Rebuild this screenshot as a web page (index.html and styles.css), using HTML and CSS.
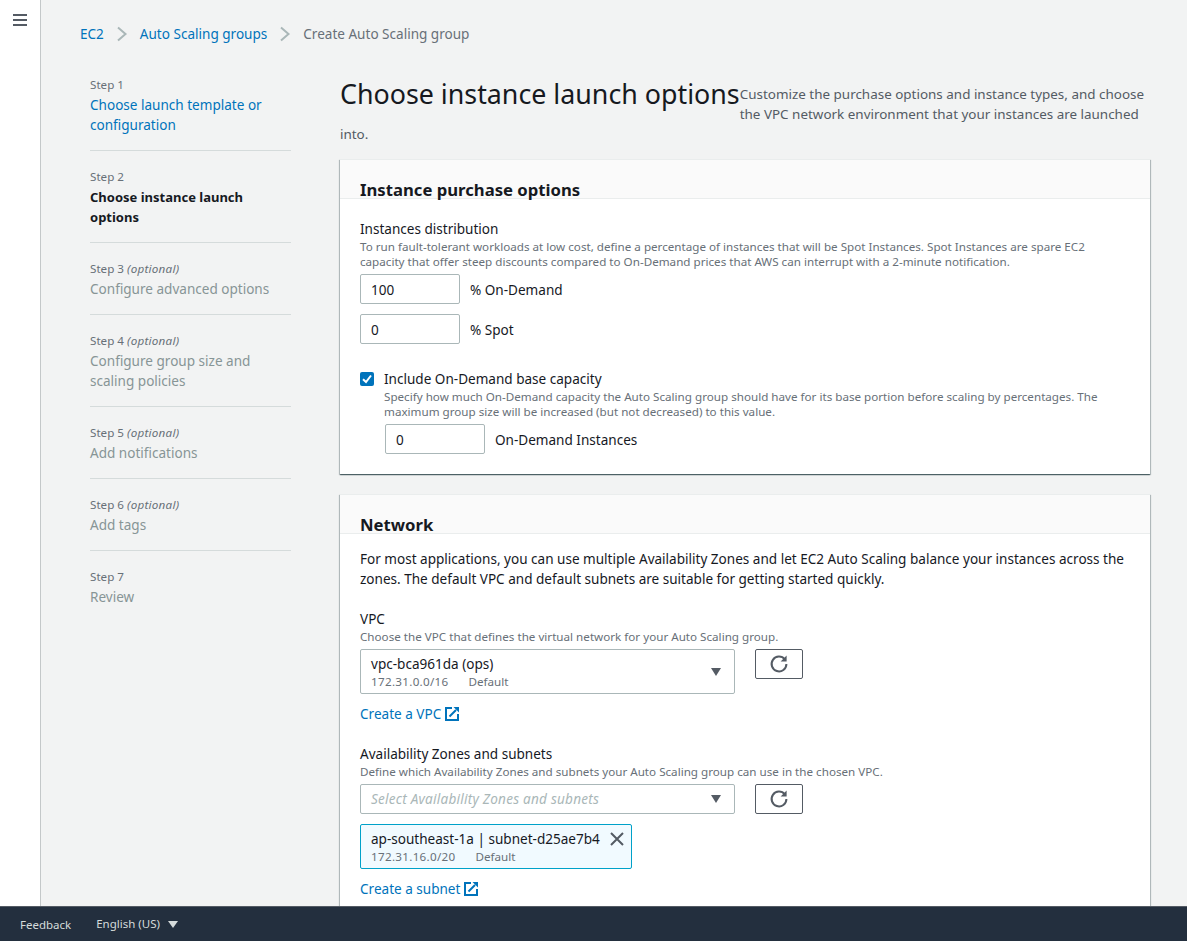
FILE: index.html
```html
<!DOCTYPE html>
<html lang="en">
<head>
    <meta charset="UTF-8">
    <meta name="viewport" content="width=device-width, initial-scale=1.0">
    <title>Create Auto Scaling group</title>
    <link rel="stylesheet" href="styles.css">
</head>
<body>

<div id="app">
    <div class="app-body">
        <nav class="side-rail">
            <button class="menu-btn" aria-label="Open navigation">
                <svg width="16" height="14" viewBox="0 0 16 14"><path d="M1 2h14M1 7h14M1 12h14" fill="none" stroke="#545b64" stroke-width="2"/></svg>
            </button>
        </nav>

        <div class="content">
            <div class="breadcrumbs">
                <a href="#">EC2</a>
                <svg class="crumb-sep" width="12" height="16" viewBox="0 0 12 16"><path d="M2 1.5 9.5 8 2 14.5" fill="none" stroke="#aab7b8" stroke-width="2"/></svg>
                <a href="#">Auto Scaling groups</a>
                <svg class="crumb-sep" width="12" height="16" viewBox="0 0 12 16"><path d="M2 1.5 9.5 8 2 14.5" fill="none" stroke="#aab7b8" stroke-width="2"/></svg>
                <span class="crumb-current">Create Auto Scaling group</span>
            </div>

            <div class="wizard">
                <ol class="steps">
                    <li class="step">
                        <div class="step-num">Step 1</div>
                        <a class="step-name" href="#">Choose launch template or configuration</a>
                    </li>
                    <li class="step">
                        <div class="step-num">Step 2</div>
                        <div class="step-name active">Choose instance launch options</div>
                    </li>
                    <li class="step">
                        <div class="step-num">Step 3 <em>(optional)</em></div>
                        <div class="step-name disabled">Configure advanced options</div>
                    </li>
                    <li class="step">
                        <div class="step-num">Step 4 <em>(optional)</em></div>
                        <div class="step-name disabled">Configure group size and scaling policies</div>
                    </li>
                    <li class="step">
                        <div class="step-num">Step 5 <em>(optional)</em></div>
                        <div class="step-name disabled">Add notifications</div>
                    </li>
                    <li class="step">
                        <div class="step-num">Step 6 <em>(optional)</em></div>
                        <div class="step-name disabled">Add tags</div>
                    </li>
                    <li class="step">
                        <div class="step-num">Step 7</div>
                        <div class="step-name disabled">Review</div>
                    </li>
                </ol>

                <main class="form-area">
                    <div class="page-head">
                        <h1>Choose instance launch options</h1>
                        <span class="page-desc">Customize the purchase options and instance types, and choose the VPC network environment that your instances are launched into.</span>
                    </div>

                    <section class="card">
                        <div class="card-head"><h2>Instance purchase options</h2></div>
                        <div class="card-body">
                            <div class="label">Instances distribution</div>
                            <div class="hint">To run fault-tolerant workloads at low cost, define a percentage of instances that will be Spot Instances. Spot Instances are spare EC2 capacity that offer steep discounts compared to On-Demand prices that AWS can interrupt with a 2-minute notification.</div>
                            <div class="input-row"><input class="num-input" type="text" value="100"><span>% On-Demand</span></div>
                            <div class="input-row second"><input class="num-input" type="text" value="0"><span>% Spot</span></div>

                            <div class="check-row">
                                <span class="checkbox">
                                    <svg width="14" height="14" viewBox="0 0 14 14"><path d="M3 7.2 6 10l5-6.5" fill="none" stroke="#fff" stroke-width="2"/></svg>
                                </span>
                                <div class="check-text">
                                    <div class="label">Include On-Demand base capacity</div>
                                    <div class="hint">Specify how much On-Demand capacity the Auto Scaling group should have for its base portion before scaling by percentages. The maximum group size will be increased (but not decreased) to this value.</div>
                                    <div class="input-row nested"><input class="num-input" type="text" value="0"><span>On-Demand Instances</span></div>
                                </div>
                            </div>
                        </div>
                    </section>

                    <section class="card">
                        <div class="card-head"><h2>Network</h2></div>
                        <div class="card-body network">
                            <p class="intro">For most applications, you can use multiple Availability Zones and let EC2 Auto Scaling balance your instances across the zones. The default VPC and default subnets are suitable for getting started quickly.</p>

                            <div class="label">VPC</div>
                            <div class="hint">Choose the VPC that defines the virtual network for your Auto Scaling group.</div>
                            <div class="select-row">
                                <div class="select tall">
                                    <div>
                                        <div class="select-value">vpc-bca961da (ops)</div>
                                        <div class="select-meta"><span class="cidr">172.31.0.0/16</span><span>Default</span></div>
                                    </div>
                                    <span class="caret"></span>
                                </div>
                                <button class="refresh" aria-label="Refresh">
                                    <svg width="20" height="20" viewBox="0 0 20 20"><path d="M15.8 5.4A7.4 7.4 0 1 0 17.4 10" fill="none" stroke="#545b64" stroke-width="2"/><path d="M17.6 1.4v6h-6z" fill="#545b64"/></svg>
                                </button>
                            </div>
                            <a class="ext-link" href="#">Create a VPC
                                <svg width="14" height="14" viewBox="0 0 14 14"><path d="M7 1H1v12h12V7" fill="none" stroke="#0073bb" stroke-width="2"/><path d="M8.5 0H14v5.5z" fill="#0073bb"/><path d="M11 3 4.5 9.5" fill="none" stroke="#0073bb" stroke-width="2"/></svg>
                            </a>

                            <div class="label zones">Availability Zones and subnets</div>
                            <div class="hint">Define which Availability Zones and subnets your Auto Scaling group can use in the chosen VPC.</div>
                            <div class="select-row">
                                <div class="select">
                                    <span class="placeholder">Select Availability Zones and subnets</span>
                                    <span class="caret"></span>
                                </div>
                                <button class="refresh" aria-label="Refresh">
                                    <svg width="20" height="20" viewBox="0 0 20 20"><path d="M15.8 5.4A7.4 7.4 0 1 0 17.4 10" fill="none" stroke="#545b64" stroke-width="2"/><path d="M17.6 1.4v6h-6z" fill="#545b64"/></svg>
                                </button>
                            </div>
                            <div class="token">
                                <div>
                                    <div class="select-value">ap-southeast-1a | subnet-d25ae7b4</div>
                                    <div class="select-meta"><span class="cidr">172.31.16.0/20</span><span>Default</span></div>
                                </div>
                                <svg class="token-x" width="16" height="16" viewBox="0 0 16 16"><path d="M2 2l12 12M14 2 2 14" fill="none" stroke="#545b64" stroke-width="2"/></svg>
                            </div>
                            <a class="ext-link" href="#">Create a subnet
                                <svg width="14" height="14" viewBox="0 0 14 14"><path d="M7 1H1v12h12V7" fill="none" stroke="#0073bb" stroke-width="2"/><path d="M8.5 0H14v5.5z" fill="#0073bb"/><path d="M11 3 4.5 9.5" fill="none" stroke="#0073bb" stroke-width="2"/></svg>
                            </a>
                        </div>
                    </section>
                </main>
            </div>
        </div>
    </div>

    <footer class="footer">
        <span class="foot-feedback">Feedback</span>
        <span class="foot-lang">English (US)<span class="foot-caret"></span></span>
    </footer>
</div>

</body>
</html>
```

FILE: styles.css
```css
* {
    box-sizing: border-box;
}
html, body {
    height: 100%;
    margin: 0;
    overflow: hidden;
}
body {
    background-color: #f2f3f3;
    color: #16191f;
    font-family: "Noto Sans", "Open Sans", sans-serif;
    font-size: 13.55px;
    line-height: 20px;
}
a {
    color: #0073bb;
    text-decoration: none;
}
#app {
    display: flex;
    flex-direction: column;
    height: 100vh;
}
.app-body {
    display: flex;
    flex: 1;
    min-height: 0;
}

/* left rail */
.side-rail {
    width: 41px;
    flex: none;
    background-color: #fff;
    border-right: 1px solid #c4c8c9;
}
.menu-btn {
    display: block;
    width: 40px;
    height: 40px;
    padding: 12px 12px;
    border: 0;
    background: none;
}
.menu-btn svg {
    display: block;
}

.content {
    flex: 1;
    min-width: 0;
    overflow: hidden;
    padding: 24px 37px 0 39px;
}

/* breadcrumbs */
.breadcrumbs {
    display: flex;
    align-items: center;
    height: 20px;
}
.crumb-sep {
    margin: 0 12px;
}
.crumb-current {
    color: #687078;
}

.wizard {
    display: flex;
    margin-top: 21px;
}

/* steps */
.steps {
    width: 201px;
    flex: none;
    margin: 10px 49px 0 10px;
    padding: 0;
    list-style: none;
}
.step {
    padding: 0 0 15px;
    margin-bottom: 16px;
    border-bottom: 1px solid #d5dbdb;
}
.step:last-child {
    border-bottom: 0;
}
.step-num {
    color: #687078;
    font-size: 11.65px;
}
.step-num em {
    letter-spacing: 0.25px;
}
.step-name {
    display: block;
}
.step-name.active {
    font-size: 13px;
    font-weight: 700;
}
.step-name.disabled {
    color: #879596;
}

/* heading */
.form-area {
    flex: 1;
    min-width: 0;
}
.page-head {
    color: #545b64;
    font-size: 13.45px;
    margin-top: 19px;
}
.page-head h1 {
    float: left;
    margin: -10px 0 0;
    color: #16191f;
    font-size: 26.8px;
    font-weight: 400;
    line-height: 40px;
}
.page-head::after {
    content: "";
    display: block;
    clear: both;
}

/* cards */
.card {
    margin-top: 15px;
    background-color: #fff;
    box-shadow: 0 1px 1px 0 rgba(0, 28, 36, 0.5), 1px 1px 1px 0 rgba(0, 28, 36, 0.2), -1px 1px 1px 0 rgba(0, 28, 36, 0.2);
    border-top: 1px solid #eaeded;
}
.card + .card {
    margin-top: 20px;
}
.card-head {
    height: 39px;
    padding: 20px 20px 0;
    background-color: #fafafa;
    border-bottom: 1px solid #eaeded;
}
.card-head h2 {
    margin: 0;
    font-size: 16.7px;
    font-weight: 700;
    line-height: 20px;
}
.card-body {
    padding: 20px 20px 20px;
}
.label {
    line-height: 20px;
}
.hint {
    color: #687078;
    font-size: 11.65px;
    line-height: 15px;
}
.input-row {
    display: flex;
    align-items: center;
    gap: 10px;
    margin-top: 5px;
}
.input-row span {
    padding-top: 2px;
}
.input-row.second {
    margin-top: 10px;
}
.input-row.nested {
    margin-top: 5px;
}
.num-input {
    width: 100px;
    height: 30px;
    padding: 2px 10px 0;
    border: 1px solid #aab7b8;
    border-radius: 2px;
    color: #16191f;
    font: inherit;
}

.check-row {
    display: flex;
    gap: 10px;
    margin-top: 25px;
}
.checkbox {
    display: block;
    flex: none;
    width: 14px;
    height: 14px;
    margin-top: 3px;
    border-radius: 2px;
    background-color: #0073bb;
}
.checkbox svg {
    display: block;
}
.check-text {
    flex: 1;
    min-width: 0;
}
.check-text .input-row {
    margin-left: 1px;
}

/* network */
.network {
    padding-top: 15px;
}
.intro {
    margin: 0 0 20px;
}
.select-row {
    display: flex;
    align-items: flex-start;
    gap: 20px;
    margin-top: 5px;
}
.select {
    display: flex;
    align-items: center;
    justify-content: space-between;
    width: 375px;
    height: 30px;
    padding: 0 13px 0 10px;
    background-color: #fff;
    border: 1px solid #aab7b8;
    border-radius: 2px;
}
.select.tall {
    height: 45px;
}
.select-value {
    line-height: 20px;
}
.select-meta {
    display: flex;
    gap: 20px;
    color: #687078;
    font-size: 11.65px;
    line-height: 15px;
}
.cidr {
    letter-spacing: 0.3px;
}
.caret {
    width: 0;
    height: 0;
    border-top: 8px solid #545b64;
    border-left: 5px solid transparent;
    border-right: 5px solid transparent;
}
.placeholder {
    color: #aab7b8;
    font-style: italic;
    letter-spacing: 0.24px;
}
.refresh {
    display: flex;
    align-items: center;
    justify-content: center;
    width: 48px;
    height: 30px;
    padding: 0;
    background-color: #fff;
    border: 1px solid #545b64;
    border-radius: 2px;
}
.ext-link {
    display: flex;
    align-items: center;
    gap: 4px;
    margin-top: 10px;
}
.label.zones {
    margin-top: 20px;
}
.token {
    display: flex;
    align-items: flex-start;
    justify-content: space-between;
    width: 272px;
    height: 45px;
    margin-top: 10px;
    padding: 4px 6px 0 10px;
    background-color: #f1faff;
    border: 1px solid #00a1c9;
    border-radius: 2px;
}
.token-x {
    margin-top: 2px;
}

/* footer */
.footer {
    display: flex;
    flex: none;
    gap: 25px;
    height: 35px;
    padding: 8px 20px 0;
    background-color: #232f3e;
    border-top: 1px solid #545b64;
    color: #d5dbdb;
    font-size: 11.5px;
}
.foot-lang {
    display: flex;
    align-items: center;
    gap: 8px;
    height: 18px;
}
.foot-caret {
    width: 0;
    height: 0;
    border-top: 7px solid #d5dbdb;
    border-left: 5px solid transparent;
    border-right: 5px solid transparent;
}
```
